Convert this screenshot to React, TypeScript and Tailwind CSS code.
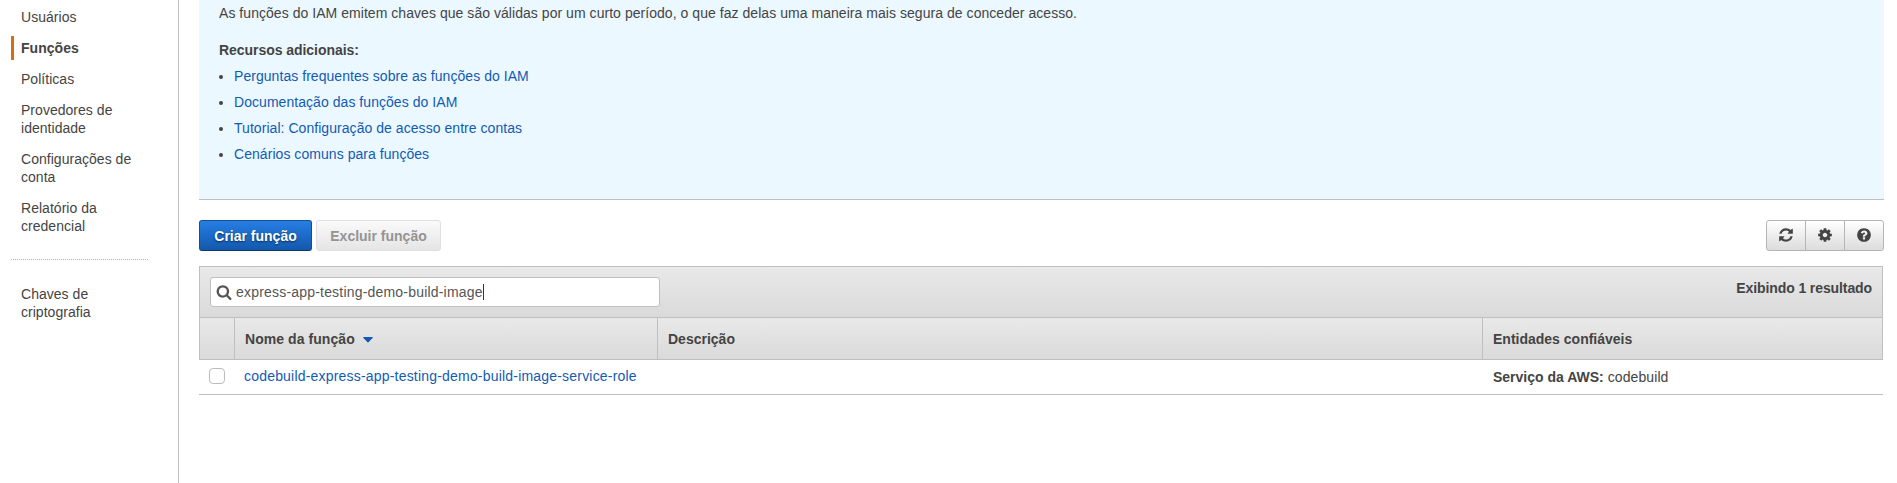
import React from "react";

const icons = {
  refresh:
    "M1639 1056q0 5-1 7-64 268-268 434.5t-478 166.5q-146 0-282.5-55t-243.5-157l-129 129q-19 19-45 19t-45-19-19-45v-448q0-26 19-45t45-19h448q26 0 45 19t19 45-19 45l-137 137q71 66 161 102t187 36q134 0 250-65t186-179q11-17 53-117 8-23 30-23h192q13 0 22.5 9.5t9.5 22.5zm25-800v448q0 26-19 45t-45 19h-448q-26 0-45-19t-19-45 19-45l138-138q-148-137-349-137-134 0-250 65t-186 179q-11 17-53 117-8 23-30 23h-199q-13 0-22.5-9.5t-9.5-22.5v-7q65-268 270-434.5t480-166.5q146 0 284 55.5t245 156.5l130-129q19-19 45-19t45 19 19 45z",
  cog: "M1152 896q0-106-75-181t-181-75-181 75-75 181 75 181 181 75 181-75 75-181zm512-109v222q0 12-8 23t-20 13l-185 28q-19 54-39 91 35 50 107 138 10 12 10 25t-9 23q-27 37-99 108t-94 71q-12 0-26-9l-138-108q-44 23-91 38-16 136-29 186-7 28-36 28h-222q-14 0-24.5-8.5t-11.5-21.5l-28-184q-49-16-90-37l-141 107q-10 9-25 9-14 0-25-11-126-114-165-168-7-10-7-23 0-12 8-23 15-21 51-66.5t54-70.5q-27-50-41-99l-183-27q-13-2-21-12.5t-8-23.5v-222q0-12 8-23t19-13l186-28q14-46 39-92-40-57-107-138-10-12-10-24 0-10 9-23 26-36 98.5-107.5t94.5-71.5q13 0 26 10l138 107q44-23 91-38 16-136 29-186 7-28 36-28h222q14 0 24.5 8.5t11.5 21.5l28 184q49 16 90 37l142-107q9-9 24-9 13 0 25 10 129 119 165 170 7 8 7 22 0 12-8 23-15 21-51 66.5t-54 70.5q26 50 41 98l183 28q13 2 21 12.5t8 23.5z",
  help: "M1024 1376v-192q0-14-9-23t-23-9h-192q-14 0-23 9t-9 23v192q0 14 9 23t23 9h192q14 0 23-9t9-23zm256-672q0-88-55.5-163t-138.5-116-170-41q-243 0-371 213-15 24 8 42l132 100q7 6 19 6 16 0 25-12 53-68 86-92 34-24 86-24 48 0 85.5 26t37.5 59q0 38-20 61t-68 45q-63 28-115.5 86.5t-52.5 125.5v36q0 14 9 23t23 9h192q14 0 23-9t9-23q0-19 21.5-49.5t54.5-49.5q32-18 49-28.5t46-35 44.5-48 28-60.5 12.5-81zm384 192q0 209-103 385.5t-279.5 279.5-385.5 103-385.5-103-279.5-279.5-103-385.5 103-385.5 279.5-279.5 385.5-103 385.5 103 279.5 279.5 103 385.5z",
  search:
    "M1216 832q0-185-131.5-316.5t-316.5-131.5-316.5 131.5-131.5 316.5 131.5 316.5 316.5 131.5 316.5-131.5 131.5-316.5zm512 832q0 52-38 90t-90 38q-54 0-90-38l-343-342q-179 124-399 124-143 0-273.5-55.5t-225-150-150-225-55.5-273.5 55.5-273.5 150-225 225-150 273.5-55.5 273.5 55.5 225 150 150 225 55.5 273.5q0 220-124 399l343 343q37 37 37 90z",
};

function Icon({ name, className }: { name: keyof typeof icons; className?: string }) {
  return (
    <svg viewBox="0 0 1792 1792" fill="currentColor" className={className} aria-hidden="true">
      <path d={icons[name]} />
    </svg>
  );
}

const navItems = [
  { label: "Usuários" },
  { label: "Funções", active: true },
  { label: "Políticas" },
  { label: "Provedores de identidade" },
  { label: "Configurações de conta" },
  { label: "Relatório da credencial" },
];

const resources = [
  "Perguntas frequentes sobre as funções do IAM",
  "Documentação das funções do IAM",
  "Tutorial: Configuração de acesso entre contas",
  "Cenários comuns para funções",
];

function Sidebar() {
  return (
    <nav className="w-[179px] shrink-0 border-r border-[#bfbfbf] pt-[5px] pl-[11px] tracking-[0.03px]">
      <ul className="flex flex-col gap-[7px]">
        {navItems.map((item) => (
          <li
            key={item.label}
            className={
              item.active
                ? "w-[137px] border-l-3 border-[#dd6b10] py-[3px] pl-[7px] font-bold"
                : "w-[137px] border-l-3 border-transparent py-[3px] pl-[7px]"
            }
          >
            <a href="#" className="block">{item.label}</a>
          </li>
        ))}
      </ul>
      <div className="mt-[21px] w-[137px] border-t border-dotted border-[#b5b5b5]" />
      <a href="#" className="mt-[25px] block w-[110px] pl-[10px]">Chaves de criptografia</a>
    </nav>
  );
}

function InfoPanel() {
  return (
    <section className="h-[200px] border-b border-[#bfbfbf] bg-[#ecf8ff] pt-1 pl-5">
      <p className="tracking-[0.046px]">
        As funções do IAM emitem chaves que são válidas por um curto período, o que faz delas uma maneira mais segura de conceder acesso.
      </p>
      <p className="mt-[19px] font-bold tracking-[-0.05px]">Recursos adicionais:</p>
      <ul className="mt-2 flex flex-col gap-2">
        {resources.map((r) => (
          <li key={r} className="flex items-center">
            <span className="mt-px mr-[11px] h-1 w-1 rounded-full bg-[#444]" />
            <a href="#" className="tracking-[0.05px] text-[#125bb3]">{r}</a>
          </li>
        ))}
      </ul>
    </section>
  );
}

function Toolbar() {
  return (
    <div className="mt-5 flex h-[31px] items-stretch">
      <button className="w-[113px] rounded-[3px] border border-[#144f96] border-b-[#0e3868] bg-linear-to-b from-[#267ee4] to-[#1259ad] pt-px font-bold text-white text-shadow-[0_1px_2px_rgba(0,0,0,0.6)]">
        Criar função
      </button>
      <button className="ml-1 w-[125px] rounded-[3px] border border-[#dfdfdf] bg-linear-to-b from-[#fafafa] to-[#e5e5e5] pt-px font-bold text-[#949494]">
        Excluir função
      </button>
      <div className="ml-auto flex w-[118px] divide-x divide-[#b5b5b5] rounded-[3px] border border-[#b5b5b5] bg-linear-to-b from-white to-[#dcdcdc]">
        {(["refresh", "cog", "help"] as const).map((name) => (
          <button key={name} aria-label={name} className="flex flex-1 items-center justify-center pb-px">
            <Icon name={name} className="h-4 w-4" />
          </button>
        ))}
      </div>
    </div>
  );
}

function RolesTable() {
  return (
    <div className="mt-[15px] mr-px">
      <div className="flex h-[51px] border border-b-0 border-[#bfbfbf] bg-linear-to-b from-[#e9e9e9] to-[#dadada]">
        <div className="mt-[10px] ml-[10px] flex h-[30px] w-[450px] items-center rounded-[3px] border border-[#bfbfbf] bg-white pl-[5px] text-[#555]">
          <Icon name="search" className="mr-1 mb-px h-4 w-4" />
          <span className="tracking-[0.195px]">express-app-testing-demo-build-image</span>
          <span className="h-4 w-px bg-[#333]" />
        </div>
        <span className="mt-[12px] mr-[10px] ml-auto font-bold tracking-[-0.1px]">Exibindo 1 resultado</span>
      </div>
      <div className="grid h-[43px] grid-cols-[35px_423px_825px_1fr] divide-x divide-[#bfbfbf] border border-[#bfbfbf] bg-linear-to-b from-[#e9e9e9] to-[#dadada] font-bold">
        <div />
        <div className="flex items-center pl-[10px] tracking-[0.06px]">
          Nome da função
          <svg viewBox="0 0 10 6" className="mt-[2px] ml-[8px] h-[6px] w-[10px] text-[#125bb3]" fill="currentColor">
            <path d="M0.7 0h8.6q0.8 0.3 0.3 1L5.5 5.2q-0.5 0.4-1 0L0.4 1q-0.5-0.7 0.3-1z" />
          </svg>
        </div>
        <div className="flex items-center pl-[10px]">Descrição</div>
        <div className="flex items-center pl-[10px]">Entidades confiáveis</div>
      </div>
      <div className="grid h-[35px] grid-cols-[45px_424px_825px_1fr] items-center border-b border-[#bfbfbf]">
        <span className="mb-[2px] ml-[10px] h-4 w-4 rounded-[4px] border border-[#bcbcbc] bg-white" />
        <a href="#" className="mb-[2px] tracking-[0.195px] text-[#125bb3]">codebuild-express-app-testing-demo-build-image-service-role</a>
        <span />
        <span><b>Serviço da AWS:</b> <span className="tracking-[0.1px]">codebuild</span></span>
      </div>
    </div>
  );
}

export default function App() {
  return (
    <div className="flex h-[483px] overflow-hidden bg-white font-['Liberation_Sans',Arial,sans-serif] text-[14px] leading-[18px] text-[#444]">
      <Sidebar />
      <main className="ml-5 w-[1685px]">
        <InfoPanel />
        <Toolbar />
        <RolesTable />
      </main>
    </div>
  );
}
